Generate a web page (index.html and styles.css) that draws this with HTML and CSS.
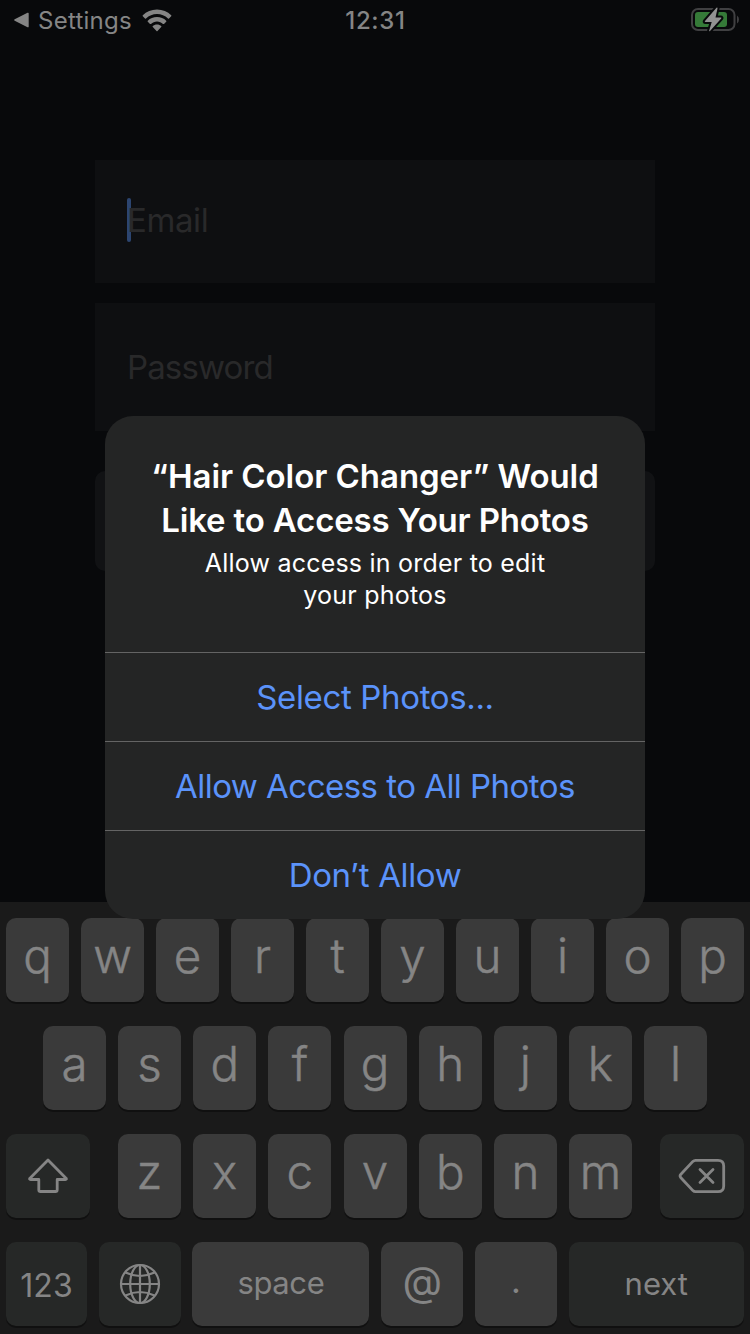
FILE: index.html
```html
<!DOCTYPE html>
<html lang="en">
<head>
<meta charset="utf-8">
<title>Hair Color Changer</title>
<link rel="stylesheet" href="styles.css">
</head>
<body>
<div class="screen">
  <header class="status">
    <div class="status-left">
      <svg class="back" viewBox="0 0 16 16"><path d="M1.2 7.2 14 .8q1.2-.5 1.2.7v13q0 1.200-1.200.7L1.200 8.800q-1.400-.8 0-1.600z"/></svg>
      <span class="back-label">Settings</span>
      <svg class="wifi" viewBox="0 0 30 23"><path d="M15 .5C9.400.5 4.400 2.700.8 6.200q-.5.500 0 1l2.200 2.200q.5.500 1 0C7 6.600 10.800 5 15 5s8 1.600 11 4.400q.5.500 1 0l2.200-2.200q.5-.5 0-1C25.600 2.700 20.600.5 15 .5z"/><path d="M15 8.100c-3.600 0-6.800 1.300-9.200 3.600q-.5.500 0 1L8 14.900q.5.400 1 0c1.600-1.500 3.700-2.400 6-2.400s4.400.9 6 2.400q.5.400 1 0l2.200-2.200q.5-.5 0-1C21.800 9.400 18.600 8.100 15 8.100z"/><path d="M15 15.500c-1.700 0-3.200.6-4.200 1.500q-.5.500 0 1l3.700 3.900q.5.500 1 0l3.700-3.900q.5-.5 0-1c-1-.9-2.500-1.500-4.200-1.500z"/></svg>
    </div>
    <div class="clock">12:31</div>
    <svg class="battery" viewBox="0 0 50 26">
      <rect x="2" y="2" width="42.500" height="21" rx="6" fill="none" stroke="#404042" stroke-width="2"/>
      <path d="M47 8.500q2 1.500 2 4t-2 4z" fill="#404042"/>
      <rect x="5" y="5" width="32" height="15" rx="3" fill="#357a38"/>
      <path class="bolt" d="M26.500.8 15 14q-.7 1 .5 1h6.200L19.200 23.500q-.2 1.300.8.400L31.200 11.600q.7-1-.5-1h-5.200L27.500 1.400q.1-1.200-1-.6z"/>
    </svg>
  </header>

  <main class="form">
    <div class="field email"><span class="caret"></span>Email</div>
    <div class="field password">Password</div>
    <div class="submit"></div>
  </main>

  <section class="keyboard">
    <div class="row"><div class="key">q</div><div class="key">w</div><div class="key">e</div><div class="key">r</div><div class="key">t</div><div class="key">y</div><div class="key">u</div><div class="key">i</div><div class="key">o</div><div class="key">p</div></div>
    <div class="row middle"><div class="key">a</div><div class="key">s</div><div class="key">d</div><div class="key">f</div><div class="key">g</div><div class="key">h</div><div class="key">j</div><div class="key">k</div><div class="key">l</div></div>
    <div class="row spread">
      <div class="key dark square"><svg class="shift" viewBox="0 0 40 36"><path d="M20 2 2 20.200q-1 1.300.6 1.300h8.200v10.200q0 1.800 1.800 1.800h14.800q1.800 0 1.800-1.800V21.500h8.200q1.600 0 .6-1.300z"/></svg></div>
      <div class="letters"><div class="key">z</div><div class="key">x</div><div class="key">c</div><div class="key">v</div><div class="key">b</div><div class="key">n</div><div class="key">m</div></div>
      <div class="key dark square"><svg class="delete" viewBox="0 0 48 36"><path d="M17.500 2.300H40q5.700 0 5.700 5.700v20q0 5.700-5.700 5.700H17.500q-1.500 0-2.600-1.100L2.900 19.700q-1.600-1.700 0-3.400L14.900 3.400q1.100-1.100 2.600-1.100z"/><path d="m22 11.500 13 13m0-13-13 13"/></svg></div>
    </div>
    <div class="row bottom">
      <div class="key dark numbers">123</div>
      <div class="key dark"><svg class="globe" viewBox="0 0 42 42"><circle cx="21" cy="21" r="19"/><ellipse cx="21" cy="21" rx="9.800" ry="19"/><path d="M21 2v38M2 21h38M6.500 9.500q14.500 7 29 0M6.500 32.500q14.500-7 29 0"/></svg></div>
      <div class="key word space">space</div>
      <div class="key at">@</div>
      <div class="key dot">.</div>
      <div class="key dark word next">next</div>
    </div>
  </section>

  <div class="overlay">
    <div class="alert" role="alertdialog">
      <div class="alert-text">
        <h1><span class="title-a">“Hair Color Changer” Would</span><br><span class="title-b">Like to Access Your Photos</span></h1>
        <p>Allow access in order to edit<br>your photos</p>
      </div>
      <div class="action select">Select Photos...</div>
      <div class="action all">Allow Access to All Photos</div>
      <div class="action deny">Don’t Allow</div>
    </div>
  </div>
</div>
</body>
</html>
```
FILE: styles.css
```css
* { box-sizing: border-box; }
body { margin: 0; font-family: Inter, "Liberation Sans", sans-serif; background: #08090b; }
.screen { position: relative; width: 750px; height: 1334px; overflow: hidden; display: flex; flex-direction: column; background: #08090b; color: #858585; }
svg { display: block; flex: none; }

.status { height: 40px; flex: none; display: grid; grid-template-columns: 1fr auto 1fr; align-items: center; padding: 0 12px 0 13px; }
.status-left { display: flex; align-items: center; fill: #858585; height: 40px; }
.back { width: 17px; height: 16px; }
.back-label { font-size: 24px; letter-spacing: 0.25px; margin-left: 8px; line-height: 40px; padding-top: 1px; }
.wifi { width: 30px; height: 23px; margin-left: 10px; }
.clock { font-size: 24px; font-weight: 500; letter-spacing: 0.7px; height: 40px; line-height: 42px; }
.battery { width: 50px; height: 26px; justify-self: end; margin-right: -2px; }
.bolt { fill: #929292; stroke: #08090b; stroke-width: 4px; paint-order: stroke; }

.form { padding: 120px 95px 0; height: 862px; flex: none; display: flex; flex-direction: column; }
.field { background: #0e0f11; color: #29292a; font-size: 33px; display: flex; align-items: center; padding-left: 32px; }
.email { height: 123px; margin-bottom: 20px; padding-bottom: 3px; letter-spacing: -0.4px; }
.password { height: 128px; margin-bottom: 40px; letter-spacing: -0.870px; }
.caret { width: 4px; height: 44px; border-radius: 2px; background: #2c4570; margin-right: -4px; }
.submit { height: 100px; border-radius: 10px; background: #111214; }

.keyboard { height: 432px; flex: none; background: #1a1a1a; padding: 16px 6px 0; display: flex; flex-direction: column; gap: 24px; }
.row { display: flex; justify-content: center; gap: 12px; height: 84px; }
.middle { gap: 12.150px; }
.spread { justify-content: space-between; }
.letters { display: flex; gap: 12.200px; }
.key { width: 63px; height: 84px; border-radius: 10px; background: #3a3a3a; box-shadow: 0 2px 0 #101010; color: #858585; font-size: 47.500px; font-weight: 300; -webkit-text-stroke: 0.500px #858585; line-height: 76px; display: flex; justify-content: center; }
.dark { background: #262827; align-items: center; }
.square { width: 84px; }
.shift { width: 40px; height: 36px; }
.delete { width: 48px; height: 36px; }
.shift, .delete, .globe { fill: none; stroke: #858585; stroke-width: 2.800; stroke-linecap: round; stroke-linejoin: round; }
.globe { width: 42px; height: 42px; stroke-width: 2.200; }
.bottom { display: grid; grid-template-columns: 80.600px 82px 177px 82px 82px 175px; column-gap: 11.800px; }
.bottom .key { width: auto; -webkit-text-stroke: 0; }
.numbers { font-size: 32px; font-weight: 400; line-height: 84px; padding-top: 3px; }
.word { font-size: 31px; font-weight: 400; line-height: 82px; }
.space { letter-spacing: -0.400px; }
.at { font-size: 41px; font-weight: 400; line-height: 78px; }
.dot { font-size: 34px; font-weight: 400; line-height: 77px; }

.overlay { position: absolute; inset: 0; display: flex; justify-content: center; align-items: flex-start; padding-top: 416px; }
.alert { width: 540px; height: 503px; border-radius: 28px; background: #242525; overflow: hidden; text-align: center; }
.alert-text { height: 236px; padding-top: 38px; color: #fff; }
h1 { margin: 0; font-size: 33px; font-weight: 600; line-height: 44px; }
.title-a { letter-spacing: -0.050px; }
.title-b { letter-spacing: -0.180px; }
p { margin: 0; font-size: 25px; line-height: 32px; padding-top: 5px; letter-spacing: 0.220px; }
.action { height: 89px; border-top: 1px solid #646464; color: #5b93fa; font-size: 33px; line-height: 88px; letter-spacing: -0.360px; }
.all { letter-spacing: -0.530px; }
```
